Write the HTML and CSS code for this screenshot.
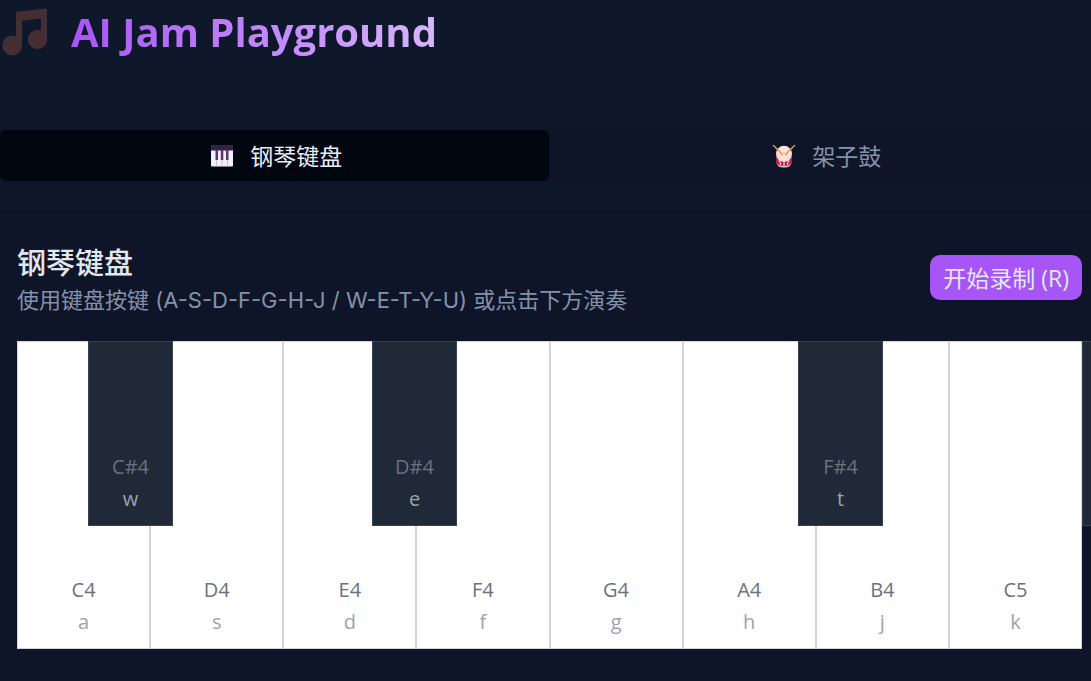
FILE: index.html
```html
<!DOCTYPE html>
<html lang="zh-CN">
<head>
<meta charset="utf-8">
<meta name="viewport" content="width=device-width, initial-scale=1">
<title>AI Jam Playground</title>
<link rel="stylesheet" href="styles.css">
</head>
<body>
<div class="app">
  <header class="header">
    <svg class="logo" viewBox="0 0 48 50" aria-hidden="true">
      <path d="M14 6.200Q14 5 15.200 4.800L43.500 1.600Q45 1.400 45 2.800V32.500A9.600 9.600 0 1 1 39 23.600V11.500L20 13.800V38.500A9.800 9.800 0 1 1 14 29.600Z"/>
    </svg>
    <h1 class="title">AI Jam Playground</h1>
  </header>

  <div class="tabs" role="tablist">
    <button class="tab tab-active" id="tab-piano" type="button" role="tab" aria-selected="true" aria-controls="panel-piano">
      <svg class="tab-icon" viewBox="0 0 24 24" aria-hidden="true">
        <path fill="#f2f0f4" d="M1 6h22v15.500a1 1 0 0 1-1 1H2a1 1 0 0 1-1-1z"/>
        <path fill="#35204a" d="M1 1h22v5.500H1z"/>
        <path stroke="#b9aec4" stroke-width=".7" d="M6.500 7v15.500M12 7v15.500M17.500 7v15.500"/>
        <path fill="#57356f" d="M5.500 6h2.500v10H5.500zM10.800 6h2.500v10h-2.500zM16 6h2.500v10h-2.500z"/>
      </svg>
      <span>钢琴键盘</span>
    </button>
    <button class="tab" id="tab-drums" type="button" role="tab" aria-selected="false">
      <svg class="tab-icon" viewBox="0 0 24 24" aria-hidden="true">
        <path fill="#d8c8c8" d="M4.500 12h15v6q0 5.500-7.500 5.500t-7.500-5.500z"/>
        <path fill="#c51645" d="M4 12h16v4q0 6-8 6T4 16z"/>
        <path d="M7 16l2 5M17 16l-2 5M12 17v5" stroke="#f6dcd8" stroke-width="1.200"/>
        <ellipse cx="12" cy="9.800" rx="8" ry="8" fill="#fbe2dc"/>
        <path d="M1.500 1.500l8.500 8.500M22.500 1.500l-8.500 8.500" fill="none" stroke="#d99a4c" stroke-width="1.500" stroke-linecap="round"/>
        <circle cx="10" cy="10" r="1.500" fill="#f5ad55"/><circle cx="14" cy="10" r="1.500" fill="#f5ad55"/>
      </svg>
      <span>架子鼓</span>
    </button>
  </div>

  <section class="panel" id="panel-piano" role="tabpanel" aria-labelledby="tab-piano">
    <div class="panel-head">
      <div>
        <h2 class="panel-title">钢琴键盘</h2>
        <p class="panel-hint">使用键盘按键 (A-S-D-F-G-H-J / W-E-T-Y-U) 或点击下方演奏</p>
      </div>
      <button class="record" type="button">开始录制 (R)</button>
    </div>
    <div class="piano">
      <button class="key" type="button"><span>C4</span><span class="bind">a</span></button>
      <button class="key" type="button"><span>D4</span><span class="bind">s</span></button>
      <button class="key" type="button"><span>E4</span><span class="bind">d</span></button>
      <button class="key" type="button"><span>F4</span><span class="bind">f</span></button>
      <button class="key" type="button"><span>G4</span><span class="bind">g</span></button>
      <button class="key" type="button"><span>A4</span><span class="bind">h</span></button>
      <button class="key" type="button"><span>B4</span><span class="bind">j</span></button>
      <button class="key" type="button"><span>C5</span><span class="bind">k</span></button>
      <button class="key sharp sharp-c" type="button"><span>C#4</span><span class="bind">w</span></button>
      <button class="key sharp sharp-d" type="button"><span>D#4</span><span class="bind">e</span></button>
      <button class="key sharp sharp-f" type="button"><span>F#4</span><span class="bind">t</span></button>
      <button class="key sharp sharp-g" type="button" aria-label="G#4"></button>
    </div>
  </section>
</div>
</body>
</html>
```
FILE: styles.css
```css
* {
  box-sizing: border-box;
}

body {
  margin: 0;
  background: #0f172a;
  color: #e2e8f0;
  font-family: "Open Sans", "Noto Sans CJK SC", sans-serif;
  overflow: hidden;
}

button {
  font: inherit;
  border: 0;
  cursor: pointer;
}

.app {
  display: flex;
  flex-direction: column;
  margin-right: -8px;
}

.header {
  display: flex;
  align-items: center;
  gap: 21px;
  height: 64px;
  padding-left: 2px;
  margin-bottom: 60px;
}

.logo {
  width: 48px;
  height: 50px;
  fill: #452d34;
}

.title {
  margin: 0;
  font-size: 40px;
  line-height: 56px;
  font-weight: 700;
  color: transparent;
  background: linear-gradient(90deg, #a855f7, #c084fc 50%, #d8b4fe);
  background-clip: text;
  -webkit-background-clip: text;
}

.tabs {
  display: grid;
  grid-template-columns: 1fr 1fr;
  gap: 2px;
  padding: 6px 0;
  background: #0f1528;
}

.tab {
  display: flex;
  align-items: center;
  justify-content: center;
  gap: 16px;
  height: 51px;
  padding: 0 4px 0 8px;
  border-radius: 6px;
  background: transparent;
  color: #8492a9;
  font-size: 23px;
  line-height: 32px;
}

.tab-active {
  background: #020610;
  color: #e8edf5;
}

.tab-icon {
  width: 24px;
  height: 24px;
}

.panel {
  margin-top: 23px;
  padding: 34px 17px 32px;
  background: #0f1528;
}

.panel-head {
  display: flex;
  align-items: flex-start;
  justify-content: space-between;
  margin-bottom: 23px;
}

.panel-title {
  margin: 0;
  font-size: 29px;
  line-height: 38px;
  font-weight: 500;
}

.panel-hint {
  margin: 0;
  font-family: Inter, "Noto Sans CJK SC", sans-serif;
  font-size: 22px;
  line-height: 36px;
  color: #8492a9;
}

.record {
  height: 45px;
  margin-top: 11px;
  padding: 0 13px;
  border-radius: 10px;
  background: #a855f7;
  color: #e2e8f0;
  font-size: 23px;
  line-height: 32px;
}

.piano {
  position: relative;
  display: grid;
  grid-template-columns: repeat(8, 1fr);
  height: 308px;
}

.key {
  display: flex;
  flex-direction: column;
  align-items: center;
  justify-content: flex-end;
  padding: 0 0 10px;
  border: 1px solid #d1d5db;
  background: #fff;
  color: #6b7280;
  font-size: 20px;
  line-height: 32px;
}

.bind {
  color: #9ca3af;
}

.sharp {
  position: absolute;
  top: 0;
  width: 8%;
  height: 60%;
  border-color: #374151;
  background: #1f2937;
}

.sharp-c {
  left: 6.66%;
}

.sharp-d {
  left: 33.33%;
}

.sharp-f {
  left: 73.33%;
}

.sharp-g {
  left: 100%;
}
```
